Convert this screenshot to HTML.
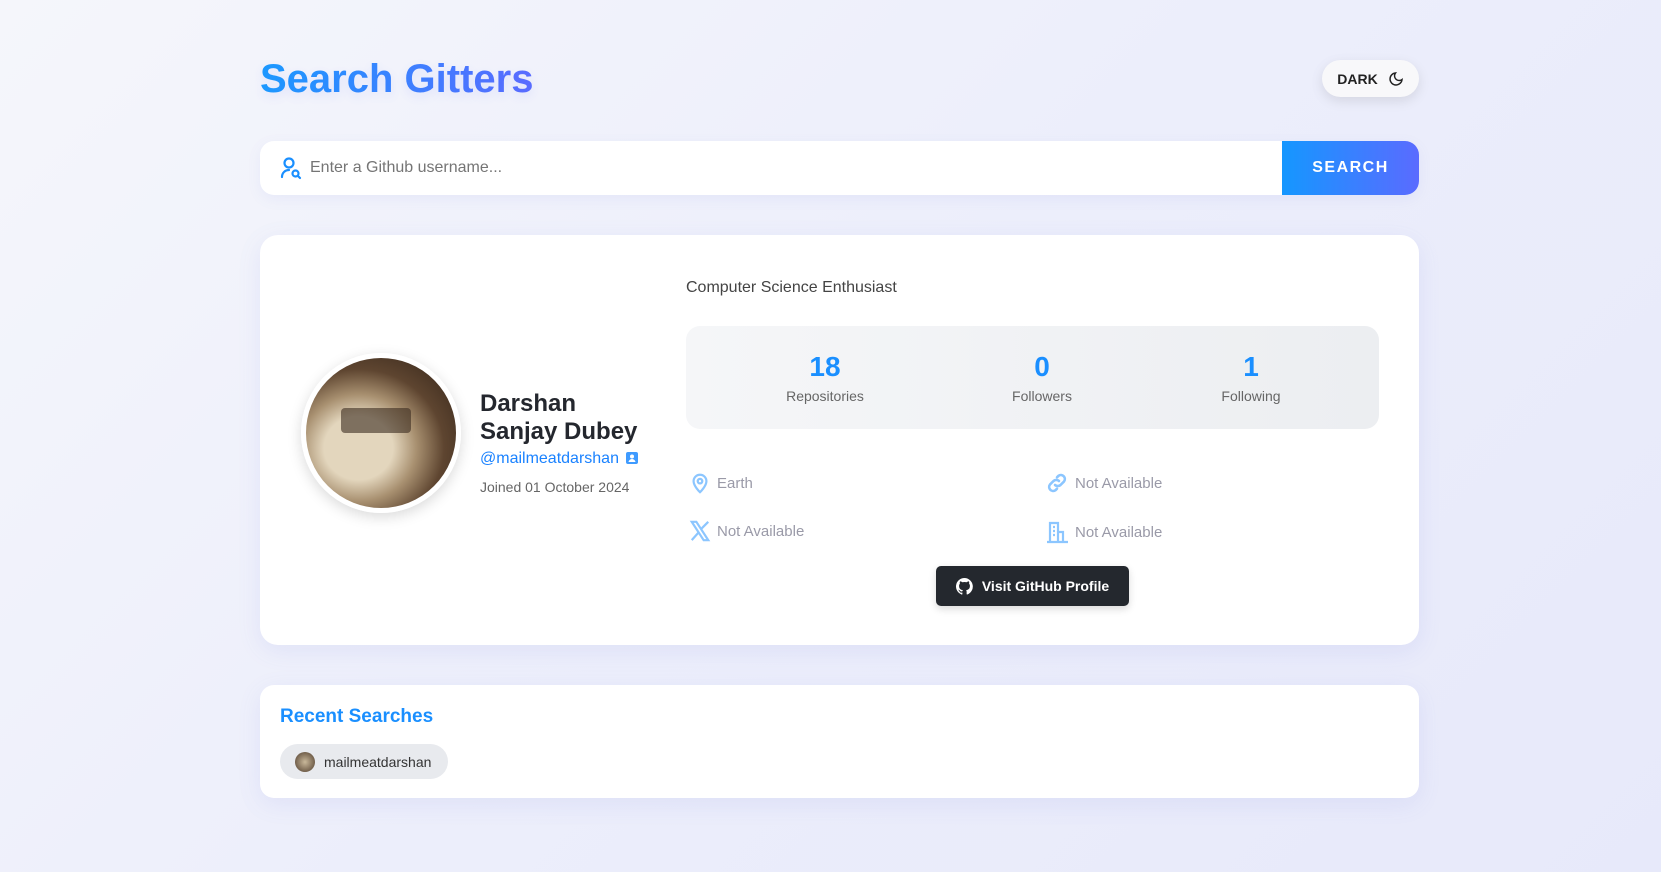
<!DOCTYPE html>
<html><head><meta charset="utf-8"><style>
*{box-sizing:border-box;margin:0;padding:0}
html,body{width:1661px;height:872px;overflow:hidden}
body{font-family:"Liberation Sans",sans-serif;background:linear-gradient(135deg,#f5f6fb 0%,#eceefb 50%,#e7e9fa 100%);position:relative}
.abs{position:absolute}
h1{position:absolute;left:260px;top:57px;font-size:40px;font-weight:700;background:linear-gradient(90deg,#1a9bff,#5a6cff);-webkit-background-clip:text;color:transparent;text-shadow:0 4px 10px rgba(90,108,255,.12)}
.dark{left:1322px;top:60px;width:97px;height:37px;border-radius:19px;background:#f8f8fa;box-shadow:0 4px 12px rgba(0,0,0,.1);display:flex;align-items:center;justify-content:center;gap:10px;font-weight:700;font-size:14px;color:#222}
.search{left:260px;top:141px;width:1159px;height:54px;border-radius:14px;background:#fff;box-shadow:0 4px 14px rgba(100,110,220,.08);overflow:hidden}
.search .ph{position:absolute;left:50px;top:18px;font-size:16px;color:#757575}
.search .btn{position:absolute;right:0;top:0;width:137px;height:54px;background:linear-gradient(90deg,#1597ff,#5a6bff);color:#fff;font-weight:700;font-size:16px;letter-spacing:1.5px;display:flex;align-items:center;justify-content:center}
.card{left:260px;top:235px;width:1159px;height:410px;border-radius:18px;background:#fff;box-shadow:0 6px 24px rgba(100,110,220,.1)}
.avatar{left:301px;top:353px;width:160px;height:160px;border-radius:50%;border:5px solid #fff;box-shadow:0 4px 14px rgba(0,0,0,.15);background:radial-gradient(ellipse at 35% 60%,#e3d6bd 0 25%,#a89070 42%,#5e4530 62%,#2e2016 100%);overflow:hidden}
.avatar:after{content:"";position:absolute;left:35px;top:50px;width:70px;height:25px;background:#3a2c20;opacity:.6;border-radius:4px}
.name{left:480px;top:390px;font-size:24px;font-weight:700;color:#24272e;line-height:28px}
.handle{left:480px;top:450px;font-size:16px;color:#1a82ff}
.joined{left:480px;top:479px;font-size:14px;color:#666}
.bio{left:686px;top:279px;font-size:16px;color:#444}
.stats{left:686px;top:326px;width:693px;height:103px;border-radius:14px;background:linear-gradient(90deg,#f5f6f8,#eceef1)}
.st{position:absolute;top:26px;width:200px;text-align:center;margin-left:-100px}
.st b{display:block;font-size:28px;color:#1a8fff;line-height:30px}
.st span{display:block;font-size:14px;color:#666;margin-top:6px}
.info{font-size:15px;color:#9a9aa8;display:flex;align-items:center;gap:6px}
.gh{left:936px;top:566px;width:193px;height:40px;border-radius:5px;background:#24282e;color:#fff;font-weight:700;font-size:14px;display:flex;align-items:center;justify-content:center;gap:9px;box-shadow:0 3px 8px rgba(0,0,0,.15)}
.recent{left:260px;top:685px;width:1159px;height:113px;border-radius:14px;background:#fff;box-shadow:0 6px 24px rgba(100,110,220,.1)}
.rt{left:280px;top:706px;font-size:19px;font-weight:700;color:#1a8fff}
.chip{left:280px;top:744px;width:168px;height:35px;border-radius:18px;background:#e8eaee;display:flex;align-items:center;padding-left:15px;gap:9px;font-size:14px;color:#333}
.chip i{width:20px;height:20px;border-radius:50%;background:radial-gradient(circle,#c9b89a,#4d3a2a)}
</style></head><body>
<h1>Search Gitters</h1>
<div class="abs dark">DARK <svg width="16" height="16" viewBox="0 0 24 24" fill="none" stroke="#222" stroke-width="2.2" stroke-linecap="round"><path d="M21 12.8A9 9 0 1 1 11.2 3a7 7 0 0 0 9.8 9.8z"/></svg></div>
<div class="abs search">
<svg class="abs" style="left:19px;top:15px" width="24" height="24" viewBox="0 0 24 24" fill="none" stroke="#1a8fff" stroke-width="2.2" stroke-linecap="round"><circle cx="10" cy="7" r="4.5"/><path d="M3 21c0-4 3-7 7-7"/><circle cx="16.5" cy="17.5" r="3"/><path d="M19 20l2 2"/></svg>
<div class="ph">Enter a Github username...</div>
<div class="btn">SEARCH</div></div>
<div class="abs card"></div>
<div class="abs avatar"></div>
<div class="abs name">Darshan<br>Sanjay Dubey</div>
<div class="abs handle">@mailmeatdarshan <svg width="12" height="12" viewBox="0 0 12 12" style="vertical-align:-1px;margin-left:3px"><rect width="12" height="12" rx="2" fill="#3f9bff"/><circle cx="6" cy="4.5" r="2" fill="#fff"/><path d="M2.5 10c.5-2 2-3 3.5-3s3 1 3.5 3z" fill="#fff"/></svg></div>
<div class="abs joined">Joined 01 October 2024</div>
<div class="abs bio">Computer Science Enthusiast</div>
<div class="abs stats">
<div class="st" style="left:139px"><b>18</b><span>Repositories</span></div>
<div class="st" style="left:356px"><b>0</b><span>Followers</span></div>
<div class="st" style="left:565px"><b>1</b><span>Following</span></div></div>
<div class="abs info" style="left:689px;top:471px"><svg width="22" height="24" viewBox="0 0 24 24" fill="none" stroke="#8cc6ff" stroke-width="2.4"><path d="M12 22s-7-6.5-7-12a7 7 0 0 1 14 0c0 5.5-7 12-7 12z"/><circle cx="12" cy="10" r="2.5"/></svg>Earth</div>
<div class="abs info" style="left:1045px;top:471px"><svg width="24" height="24" viewBox="0 0 24 24" fill="none" stroke="#8cc6ff" stroke-width="2.6" stroke-linecap="round"><path d="M10 14a4 4 0 0 0 5.5 0l3.5-3.5a4 4 0 0 0-5.5-5.7L12 6.3"/><path d="M14 10a4 4 0 0 0-5.5 0L5 13.5a4 4 0 0 0 5.5 5.7l1.5-1.5"/></svg>Not Available</div>
<div class="abs info" style="left:689px;top:520px"><svg width="22" height="22" viewBox="0 0 24 24" fill="none" stroke="#8cc6ff" stroke-width="2.4"><path d="M3 2h5l13 20h-5z"/><path d="M3 22L11 13M13 10l8-8"/></svg>Not Available</div>
<div class="abs info" style="left:1045px;top:520px"><svg width="24" height="24" viewBox="0 0 24 24" fill="none" stroke="#8cc6ff" stroke-width="2.2"><path d="M5 22V3h8v19M13 12h5v10M2 22h21M8 7h2M8 11h2M8 15h2"/></svg>Not Available</div>
<div class="abs gh"><svg width="17" height="17" viewBox="0 0 16 16" fill="#fff"><path d="M8 0a8 8 0 0 0-2.5 15.6c.4 0 .5-.2.5-.4v-1.5c-2.2.5-2.7-1-2.7-1-.4-.9-.9-1.200-.9-1.200-.7-.5.1-.5.1-.5.8.1 1.2.8 1.2.8.7 1.3 1.9.9 2.3.7.1-.5.3-.9.5-1.1-1.8-.2-3.6-.9-3.6-4 0-.9.3-1.6.8-2.1-.1-.2-.4-1 .1-2.1 0 0 .7-.2 2.2.8a7.500 7.500 0 0 1 4 0c1.500-1 2.200-.8 2.200-.8.400 1.100.200 1.900.100 2.100.500.600.800 1.300.800 2.100 0 3.100-1.900 3.800-3.600 4 .3.300.5.800.5 1.500v2.200c0 .2.100.5.600.4A8 8 0 0 0 8 0z"/></svg>Visit GitHub Profile</div>
<div class="abs recent"></div>
<div class="abs rt">Recent Searches</div>
<div class="abs chip"><i></i>mailmeatdarshan</div>
</body></html>
